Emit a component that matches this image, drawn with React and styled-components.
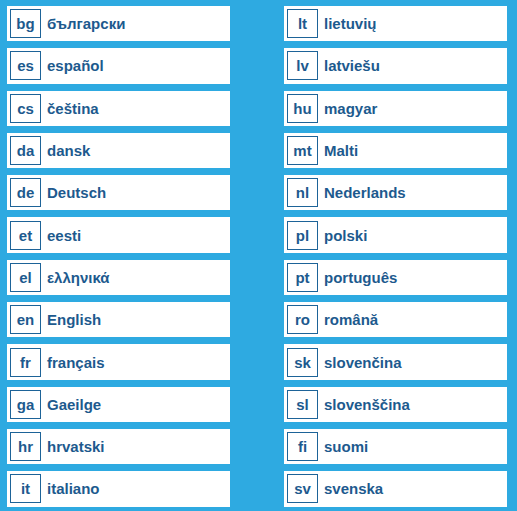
import React from 'react';
import styled, { createGlobalStyle } from 'styled-components';

const GlobalStyle = createGlobalStyle`
    html, body {
        margin: 0;
        padding: 0;
        background: #2eaae1;
    }
    body {
        font-family: "Liberation Sans", Arial, sans-serif;
    }
`;

const Page = styled.div`
    width: 517px;
    height: 511px;
    box-sizing: border-box;
    padding: 6px 10px 0 7px;
    background: #2eaae1;
`;

const Grid = styled.ul`
    list-style: none;
    margin: 0;
    padding: 0;
    display: grid;
    grid-template-columns: 223px 223px;
    grid-auto-flow: column;
    grid-template-rows: repeat(12, 35.3px);
    column-gap: 54px;
    row-gap: 7px;
`;

const Item = styled.li`
    display: flex;
    align-items: center;
    background: #fff;
    padding-left: 3px;
`;

const Code = styled.span`
    display: flex;
    align-items: center;
    justify-content: center;
    width: 29px;
    height: 27px;
    border: 1px solid #1d6398;
    color: #1d5a8e;
    font-size: 15px;
    font-weight: bold;
`;

const Name = styled.span`
    margin-left: 6px;
    color: #1d5a8e;
    font-size: 15px;
    font-weight: bold;
`;

const languages = [
    ['bg', 'български'],
    ['es', 'español'],
    ['cs', 'čeština'],
    ['da', 'dansk'],
    ['de', 'Deutsch'],
    ['et', 'eesti'],
    ['el', 'ελληνικά'],
    ['en', 'English'],
    ['fr', 'français'],
    ['ga', 'Gaeilge'],
    ['hr', 'hrvatski'],
    ['it', 'italiano'],
    ['lt', 'lietuvių'],
    ['lv', 'latviešu'],
    ['hu', 'magyar'],
    ['mt', 'Malti'],
    ['nl', 'Nederlands'],
    ['pl', 'polski'],
    ['pt', 'português'],
    ['ro', 'română'],
    ['sk', 'slovenčina'],
    ['sl', 'slovenščina'],
    ['fi', 'suomi'],
    ['sv', 'svenska'],
];

const App = () => {
    return (
        <Page>
            <GlobalStyle />
            <Grid>
                {languages.map(([code, name]) => (
                    <Item key={code} lang={code}>
                        <Code>{code}</Code>
                        <Name>{name}</Name>
                    </Item>
                ))}
            </Grid>
        </Page>
    );
};

export default App;
